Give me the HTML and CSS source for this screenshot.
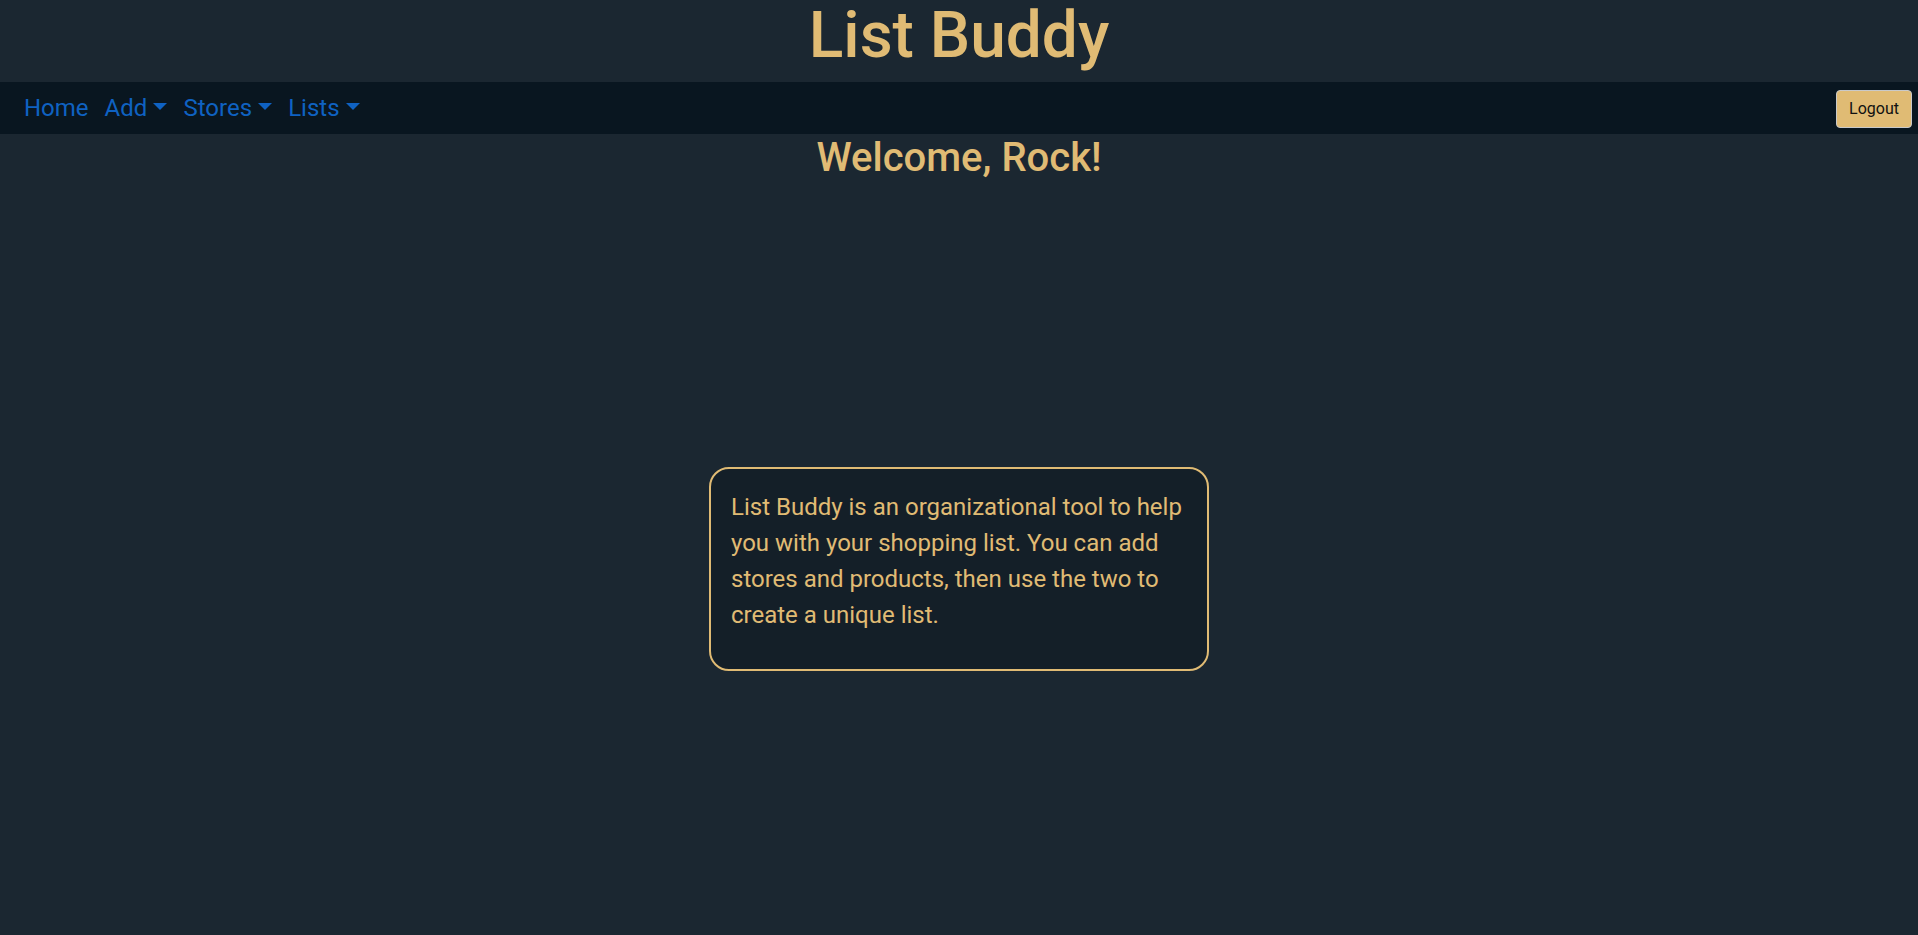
FILE: index.html
```html
<!DOCTYPE html>
<html lang="en">
<head>
<meta charset="utf-8">
<title>List Buddy</title>
<link rel="stylesheet" href="styles.css">
</head>
<body>
<header class="site-header">
  <h1 class="brand">List Buddy</h1>
</header>
<nav class="navbar">
  <ul class="nav-links">
    <li><a class="nav-link" href="#">Home</a></li>
    <li><a class="nav-link dropdown-toggle" href="#">Add</a></li>
    <li><a class="nav-link dropdown-toggle" href="#">Stores</a></li>
    <li><a class="nav-link dropdown-toggle" href="#">Lists</a></li>
  </ul>
  <button class="logout-btn" type="button">Logout</button>
</nav>
<main class="main">
  <h2 class="welcome">Welcome, Rock!</h2>
  <section class="intro-card">
    <p>List Buddy is an organizational tool to help you with your shopping list. You can add stores and products, then use the two to create a unique list.</p>
  </section>
</main>
</body>
</html>
```

FILE: styles.css
```css
* { box-sizing: border-box; }
html, body {
  margin: 0;
  padding: 0;
  min-height: 100%;
}
body {
  background: #1b2731;
  font-family: Roboto, "Liberation Sans", Arial, sans-serif;
  color: #e0bb74;
  min-height: 935px;
}
.site-header {
  height: 82px;
  display: flex;
  justify-content: center;
}
.brand {
  margin: 0;
  font-size: 64px;
  font-weight: 500;
  line-height: 72px;
  color: #e0bb74;
}
.navbar {
  height: 52px;
  background: #091620;
  display: flex;
  align-items: center;
  justify-content: space-between;
  padding: 0 6px 0 16px;
}
.nav-links {
  list-style: none;
  margin: 0;
  padding: 0;
  display: flex;
}
.nav-link {
  display: block;
  padding: 0 8px;
  font-size: 24px;
  color: #0f62c2;
  text-decoration: none;
}
.dropdown-toggle::after {
  display: inline-block;
  margin-left: .255em;
  vertical-align: .255em;
  content: "";
  border-top: .3em solid;
  border-right: .3em solid transparent;
  border-left: .3em solid transparent;
  border-bottom: 0;
}
.logout-btn {
  width: 76px;
  height: 38px;
  padding: 6px 12px;
  font-family: Roboto, "Liberation Sans", Arial, sans-serif;
  font-size: 16px;
  line-height: 24px;
  color: #111;
  background: #e0bb74;
  border: 1px solid #c9c9c9;
  border-radius: 4px;
  margin-top: 2px;
}
.main {
  display: flex;
  flex-direction: column;
  align-items: center;
}
.welcome {
  margin: 0;
  font-size: 40px;
  font-weight: 500;
  line-height: 48px;
  color: #e0bb74;
}
.intro-card {
  margin-top: 285px;
  width: 500px;
  background: #141f28;
  border: 2px solid #e0bb74;
  border-radius: 20px;
  padding: 20px;
}
.intro-card p {
  margin: 0 0 16px;
  font-size: 24px;
  line-height: 36px;
  color: #e0bb74;
}
```
